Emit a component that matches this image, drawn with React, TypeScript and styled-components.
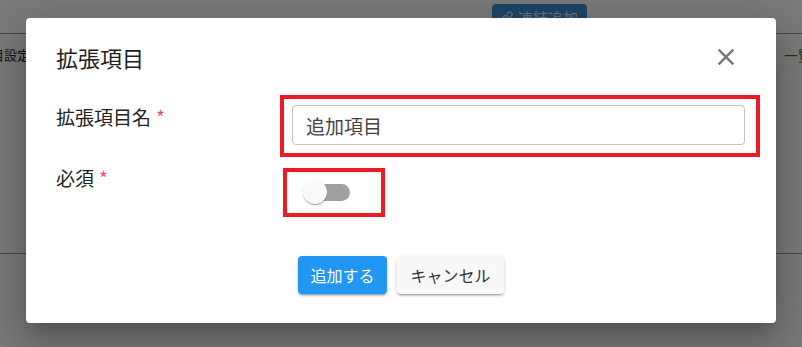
import styled, { createGlobalStyle } from "styled-components";
import { Link } from "lucide-react";

const GlobalStyle = createGlobalStyle`
  html, body { margin: 0; padding: 0; }
  body {
    font-family: "Noto Sans CJK JP", "Noto Sans", sans-serif;
    background: #fff;
    overflow: hidden;
  }
`;

export default function App() {
  return (
    <Page>
      <GlobalStyle />

      {/* page behind the dialog */}
      <TopBar>
        <LinkButton>
          <Link size={12} strokeWidth={2.5} />
          連結追加
        </LinkButton>
      </TopBar>
      <BodyRow>
        <LeftCell>
          <span>項目設定</span>
        </LeftCell>
        <RightCell>一覧</RightCell>
      </BodyRow>

      <Backdrop>
        <Dialog>
          <Header>
            <Title>拡張項目</Title>
            <CloseButton aria-label="close">
              <svg width="28" height="28" viewBox="0 0 24 24">
                <path
                  fill="#757575"
                  d="M19 6.41 17.59 5 12 10.59 6.41 5 5 6.41 10.59 12 5 17.59 6.41 19 12 13.41 17.59 19 19 17.59 13.41 12z"
                />
              </svg>
            </CloseButton>
          </Header>

          <Form>
            <Label>
              拡張項目名<Required>*</Required>
            </Label>
            <InputField $inset="-10px -15px -12px -12px">
              <Input value="追加項目" readOnly />
            </InputField>

            <Label>
              必須<Required>*</Required>
            </Label>
            <SwitchField $inset="-5px -33px -6px -9px">
              <SwitchRoot>
                <Track />
                <Thumb />
              </SwitchRoot>
            </SwitchField>
          </Form>

          <Footer>
            <Button $primary>追加する</Button>
            <Button>キャンセル</Button>
          </Footer>
        </Dialog>
      </Backdrop>
    </Page>
  );
}

const Page = styled.div`
  position: relative;
  width: 802px;
  height: 347px;
  overflow: hidden;
  background: #fff;
`;

const TopBar = styled.div`
  box-sizing: border-box;
  height: 34px;
  display: flex;
  align-items: flex-start;
  padding-left: 492px;
  border-bottom: 1px solid #9a9a9a;
`;

const LinkButton = styled.div`
  margin-top: 4px;
  height: 26px;
  display: flex;
  align-items: center;
  gap: 5px;
  padding: 0 9px;
  border-radius: 4px;
  background: #3f91d8;
  color: #e8eef5;
  font-size: 15px;
`;

const BodyRow = styled.div`
  box-sizing: border-box;
  height: 220px;
  display: flex;
  justify-content: space-between;
  align-items: flex-start;
  padding-top: 11px;
  border-bottom: 1px solid #9a9a9a;
`;

const LeftCell = styled.div`
  width: 30px;
  display: flex;
  justify-content: flex-end;
  overflow: hidden;
  white-space: nowrap;
  font-size: 13px;
  color: #222;
`;

const RightCell = styled.div`
  width: 18px;
  overflow: hidden;
  white-space: nowrap;
  font-size: 14px;
  color: #2e7d32;
`;

const Backdrop = styled.div`
  position: absolute;
  inset: 0;
  background: rgba(0, 0, 0, 0.52);
  display: flex;
  justify-content: center;
  align-items: flex-start;
  padding-top: 18px;
`;

const Dialog = styled.div`
  width: 750px;
  background: #fff;
  border-radius: 4px;
  box-shadow: 0 11px 15px -7px rgba(0, 0, 0, 0.2),
    0 24px 38px 3px rgba(0, 0, 0, 0.14), 0 9px 46px 8px rgba(0, 0, 0, 0.12);
`;

const Header = styled.div`
  display: flex;
  align-items: center;
  justify-content: space-between;
  height: 40px;
  padding: 19px 30px 0 30px;
`;

const Title = styled.h2`
  margin: 0;
  font-size: 22px;
  font-weight: 400;
  line-height: 32px;
  color: #212121;
`;

const CloseButton = styled.button`
  width: 40px;
  height: 40px;
  padding: 0;
  border: none;
  background: transparent;
  display: flex;
  align-items: center;
  justify-content: center;
`;

const Form = styled.div`
  display: grid;
  grid-template-columns: 236px 1fr;
  align-items: start;
  row-gap: 19px;
  padding: 26px 31px 0 30px;
`;

const Label = styled.div`
  font-size: 19px;
  line-height: 28px;
  color: #222;
`;

const Required = styled.span`
  margin-left: 5px;
  color: #f2506a;
`;

const Marked = styled.div<{ $inset: string }>`
  position: relative;
  &::after {
    content: "";
    position: absolute;
    inset: ${(p) => p.$inset};
    border: 4px solid #ed1c24;
    pointer-events: none;
  }
`;

const InputField = styled(Marked)`
  margin-top: 2px;
`;

const Input = styled.input`
  box-sizing: border-box;
  display: block;
  width: 100%;
  height: 40px;
  padding: 0 13px;
  border: 1px solid #c4c4c4;
  border-radius: 4px;
  font-family: inherit;
  font-size: 19px;
  color: #444;
  outline: none;
`;

const SwitchField = styled(Marked)`
  justify-self: start;
  margin-top: 9px;
`;

const SwitchRoot = styled.span`
  position: relative;
  display: block;
  width: 60px;
  height: 38px;
`;

const Track = styled.span`
  position: absolute;
  left: 14px;
  top: 10.5px;
  width: 44px;
  height: 17px;
  border-radius: 9px;
  background: #a0a0a0;
`;

const Thumb = styled.span`
  position: absolute;
  left: 11px;
  top: 7px;
  width: 24px;
  height: 24px;
  border-radius: 50%;
  background: #fafafa;
  box-shadow: 0 2px 1px -1px rgba(0, 0, 0, 0.2), 0 1px 1px 0 rgba(0, 0, 0, 0.14),
    0 1px 3px 0 rgba(0, 0, 0, 0.12);
`;

const Footer = styled.div`
  display: flex;
  justify-content: center;
  gap: 10px;
  margin-top: 45px;
  padding-bottom: 29px;
`;

const Button = styled.button<{ $primary?: boolean }>`
  height: 38px;
  padding: 0 ${(p) => (p.$primary ? "12.5px" : "13.5px")};
  border: none;
  border-radius: 4px;
  font-family: inherit;
  font-size: 16px;
  background: ${(p) => (p.$primary ? "#2196f3" : "#f8f8f8")};
  color: ${(p) => (p.$primary ? "#fff" : "#333")};
  box-shadow: 0 3px 1px -2px rgba(0, 0, 0, 0.2), 0 2px 2px 0 rgba(0, 0, 0, 0.14),
    0 1px 5px 0 rgba(0, 0, 0, 0.12);
`;
